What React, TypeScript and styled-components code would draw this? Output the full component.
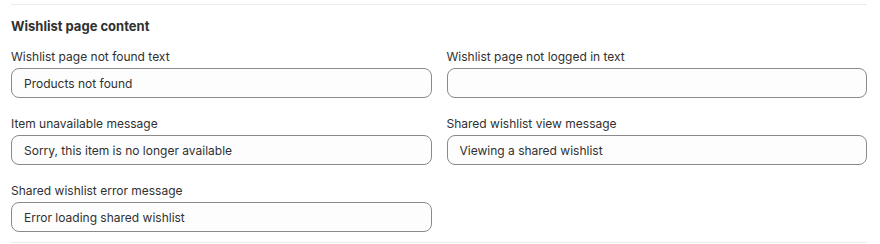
import styled, { createGlobalStyle } from 'styled-components';

const GlobalStyle = createGlobalStyle`
  body {
    margin: 0;
    background: #ffffff;
    font-family: 'Inter', 'Liberation Sans', sans-serif;
    color: #303030;
  }
`;

const fields = [
  { label: 'Wishlist page not found text', value: 'Products not found' },
  { label: 'Wishlist page not logged in text', value: '' },
  { label: 'Item unavailable message', value: 'Sorry, this item is no longer available' },
  { label: 'Shared wishlist view message', value: 'Viewing a shared wishlist' },
  { label: 'Shared wishlist error message', value: 'Error loading shared wishlist' },
];

export default function App() {
  return (
    <>
      <GlobalStyle />
      <Page>
        <Section>
          <Heading>Wishlist page content</Heading>
          <FieldGrid>
            {fields.map((f) => (
              <Field key={f.label}>
                <Label>{f.label}</Label>
                <Input defaultValue={f.value} />
              </Field>
            ))}
          </FieldGrid>
        </Section>
      </Page>
    </>
  );
}

const Page = styled.div`
  padding: 4px 13px 0 11px;
`;

const Section = styled.section`
  border-top: 1px solid #ebebeb;
  border-bottom: 1px solid #ebebeb;
  padding: 11px 0 10px;
`;

const Heading = styled.h2`
  margin: 0 0 11px;
  font-size: 13px;
  line-height: 20px;
  font-weight: 650;
  color: #303030;
`;

const FieldGrid = styled.div`
  display: grid;
  grid-template-columns: 1fr 1fr;
  column-gap: 15px;
  row-gap: 16px;
`;

const Field = styled.div`
  display: flex;
  flex-direction: column;
  gap: 1px;
`;

const Label = styled.label`
  font-size: 12px;
  line-height: 20px;
  color: #303030;
`;

const Input = styled.input`
  box-sizing: border-box;
  height: 30px;
  width: 100%;
  padding: 0 12px;
  border: 1px solid #8a8a8a;
  border-radius: 8px;
  background: #fdfdfd;
  font-family: 'Inter', 'Liberation Sans', sans-serif;
  font-size: 12px;
  color: #303030;
  outline: none;
`;
